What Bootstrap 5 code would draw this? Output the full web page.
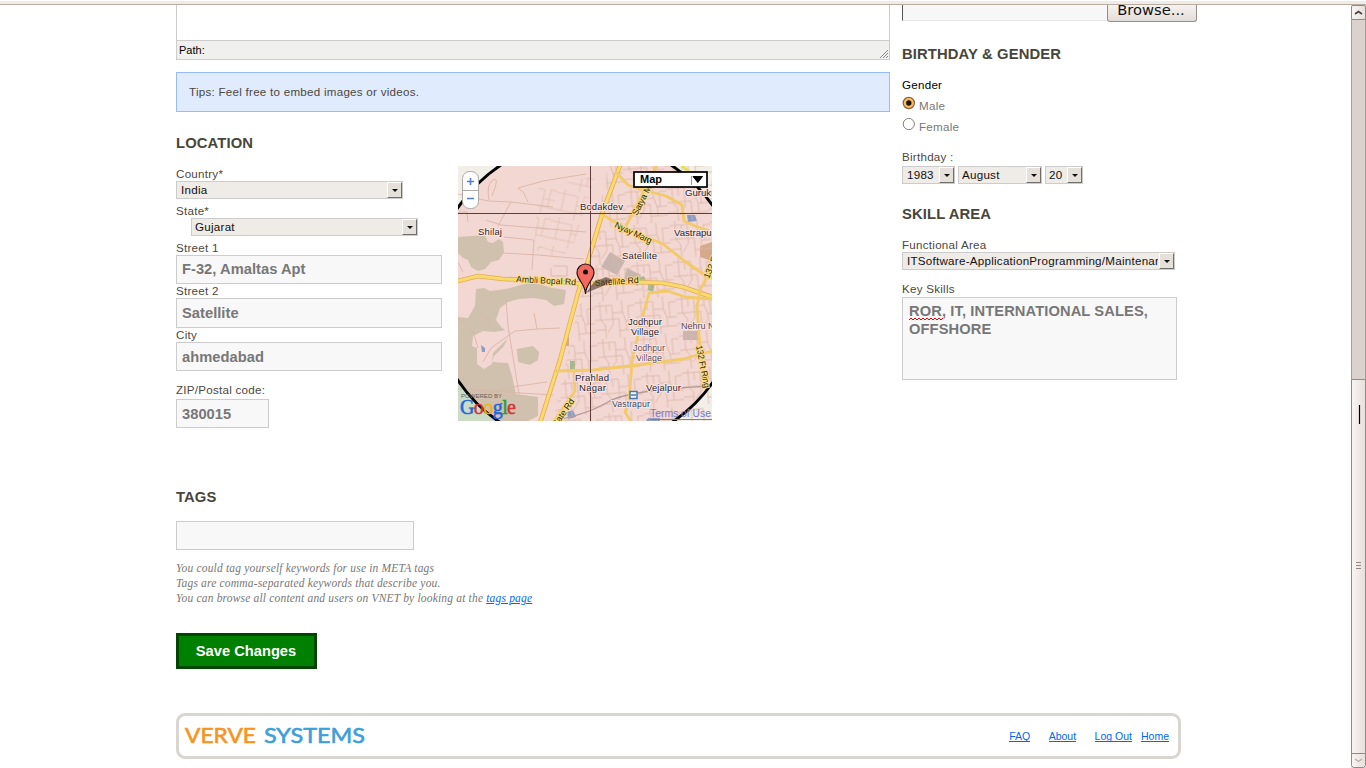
<!DOCTYPE html>
<html lang="en">
<head>
<meta charset="utf-8">
<meta name="viewport" content="width=device-width, initial-scale=1">
<title>Edit profile</title>
<link href="https://cdn.jsdelivr.net/npm/bootstrap@5.3.0/dist/css/bootstrap.min.css" rel="stylesheet">
<style>
body{font-family:"Liberation Sans",Arial,sans-serif;font-size:11.6px;line-height:14px;letter-spacing:.26px;color:#4b4840;background:#fff;height:768px;overflow:hidden}
.topstrip{height:5px;background:#efebe7;border-top:1px solid #fff;border-bottom:1px solid #b9aca0}
.viewport{height:763px}
.page{width:1005px;margin-left:176px}
.maincol{width:714px;height:708px}
.sidecol{width:295px;margin-right:-16px}
.editor{height:55px;border:1px solid #ccc;border-top:0}
.pathbar{height:19px;background:#f0f0ee;border-top:1px solid #ccc;color:#000;font-size:11px;letter-spacing:0;padding-left:2px;line-height:18px}
.tips{height:40px;margin-top:12px;padding:0 12px;background:#e0ebfe;border:1px solid #96bdf9;line-height:38px}
h2.sect{font-size:14.8px;line-height:18px;font-weight:700;letter-spacing:.12px;margin:0;color:#48453a}
.lbl{display:block;height:14px;line-height:14px}
.field{display:block;height:29px;width:266px;border:1px solid #ccc;border-radius:0;background:#f8f8f8;color:#777;font:700 14.7px/18px "Liberation Sans",Arial,sans-serif;letter-spacing:.03px;padding:0 5px}
.pick{position:relative;height:18px;width:227px}
.pick select{appearance:none;display:block;width:100%;height:18px;border:1px solid #ccc;border-radius:0;background:#efebe7;color:#111;font:11.6px/16px "Liberation Sans",Arial,sans-serif;letter-spacing:.26px;padding:0 16px 0 4px;overflow:hidden;opacity:1}
.pick i{position:absolute;right:1px;top:1px;width:15px;height:16px;background:#e6e0da;border:1px solid;border-color:#fff #716f6b #716f6b #fff}
.pick i::after{content:"";position:absolute;left:4px;top:6px;border:3px solid transparent;border-top-color:#111;border-bottom:0}
.hint{font:italic 11.5px/15px "Liberation Serif",serif;letter-spacing:.18px;color:#777;margin-top:11px}
a{color:#06f}
.save{width:141px;height:36px;margin-top:27px;background:#008000;border:3px solid #004600;border-radius:0;color:#fff;font-weight:700;font-size:14.7px;letter-spacing:0;padding:0 1px 0 0}
.foot{height:46px;border:3px solid #d9d5d1;border-radius:9px}
.foot a{font-size:10.5px;letter-spacing:0;line-height:12px;text-decoration:none;border-bottom:1px solid #06f;height:12px;position:relative;top:-.5px}
.mapbox{width:254px;height:255px;margin-left:16px}
.filebox{width:205px;height:16px;background:#f7f7f7;border-left:1px solid #555;border-bottom:1px solid #e6e6e6}
.browse{width:90px;height:17px;background:linear-gradient(#f5f2f0,#e4ddd7);border:1px solid #978d84;border-top:0;border-radius:0 0 3px 3px;color:#111;font:14.7px/9px "DejaVu Sans",sans-serif;letter-spacing:0;text-align:center;padding-right:2px}
.radioline{height:21px;color:#777}
.radioline svg{margin-right:4px}
.skills{width:275px;height:83px;border:1px solid #ccc;background:#f8f8f8;color:#777;font:700 14.7px/18px "Liberation Sans",Arial,sans-serif;letter-spacing:.1px;padding:4px 6px}
.sb{width:15px;flex:none}
</style>
</head>
<body>
<div class="topstrip"></div>
<div class="viewport d-flex justify-content-between">
 <div class="page">
  <div class="d-flex">
   <main class="maincol">
    <div class="editor d-flex flex-column justify-content-end">
      <div class="pathbar d-flex justify-content-between align-items-end"><span>Path:</span>
       <svg width="10" height="10" viewBox="0 0 10 10" stroke="#888" stroke-width="1"><path d="M1 9 9 1M4 9 9 4M7 9 9 7"/></svg></div>
    </div>
    <div class="tips">Tips: Feel free to embed images or videos.</div>
    <h2 class="sect" style="margin-top:22px">LOCATION</h2>
    <div class="d-flex" style="margin-top:14px;height:322px">
     <form style="padding-top:1px">
      <label class="lbl">Country*</label>
      <div class="pick"><select><option>India</option></select><i></i></div>
      <label class="lbl" style="margin-top:5px">State*</label>
      <div class="pick" style="margin-left:15px"><select style="padding-left:3px"><option>Gujarat</option></select><i></i></div>
      <label class="lbl" style="margin-top:5px">Street 1</label>
      <input class="field" style="padding-bottom:1px" value="F-32, Amaltas Apt">
      <label class="lbl">Street 2</label>
      <input class="field" style="height:30px" value="Satellite">
      <label class="lbl">City</label>
      <input class="field" value="ahmedabad">
      <label class="lbl" style="margin-top:12px">ZIP/Postal code:</label>
      <input class="field" style="width:93px;margin-top:2px" value="380015">
     </form>
     <svg class="mapbox" viewBox="0 0 254 255" font-family="Liberation Sans" letter-spacing="0">
      <defs>
       <clipPath id="mc"><path d="M0 0h254v255H0z"/></clipPath>
       <pattern id="streets" width="34" height="29" patternUnits="userSpaceOnUse" patternTransform="rotate(12)"><path d="M0 5h22v9h12M8 0v22M0 22h34M22 14v15M28 22V4h6" fill="none" stroke="#dfbfb1" stroke-width=".8"/></pattern>
       <pattern id="streets2" width="41" height="37" patternUnits="userSpaceOnUse" patternTransform="rotate(-5)"><path d="M0 4h18v8h10l3 9h10M6 0v18l4 6v13M0 18h24v12h17M18 12v11l-6 8M28 0v12M34 21V6h7M24 30v7M0 28h10M31 21v9M12 4v8" fill="none" stroke="#d9b5a6" stroke-width=".8"/></pattern>
      </defs>
      <g clip-path="url(#mc)">
       <path fill="#f1efe8" d="M0 0h254v255H0z"/>
       <path fill="#cadbc6" d="M0 215 45 255H0z"/>
       <circle cx="128" cy="128" r="154" fill="#f3d7d2"/>
       <g fill="#cfc1ae">
        <path d="M0 71 27 69 30 76 35 77 41 73 45 76 46 86 41 94 33 96 27 103 20 105 13 101 10 94 5 92 0 87z"/>
        <path d="M18 123 26 122 32 125 48 123 74 116 94 122 108 124 106 138 96 140 88 134 75 132 61 133 50 136 42 142 38 154 44 162 52 167 46 180 36 190 34 196 50 197 54 210 58 228 80 231 80 250 70 255H41L0 217V151L10 152 17 140z"/>
        <path d="M59 183 75 180 81 186 80 194 72 199 60 196z"/>
       </g>
       <path fill="#f3d7d2" d="M15 170 25 165 36 166 48 164 53 169 35 187 34 198 26 203 19 198 19 182 14 180z"/>
       <path d="M23 179l4 3v4h-3z" fill="#8f9cc0"/>
       <g fill="#c9b5b0"><path d="M152 86l15 9-8 14-16-8z"/><path d="M225 165h17v9h-17zM169 102l14 7-3 11-14-6z"/></g>
       <path fill="#d5a98b" d="M242 80l12-4v19l-12-4zM106 171h5v9h-5z"/>
       <path fill="#a5b78d" d="M112 195h5v9h-5zM190 119l7-2-2 9-5-2zM181 112l5-2 2 5-5 2z"/>
       <path fill="#8c9cc8" d="M229 49h8l2 6-9 1zM109 246l6-2 3 7-8 2zM190 252h12v3h-14z"/>
       <path fill="url(#streets)" d="M80 22 138 10 115 80 104 92 76 84z"/>
       <path fill="url(#streets2)" d="M150 0H254V255H95L112 178 135 75z"/>
       <g fill="none" stroke="#dbb5a7" stroke-width=".9">
        <path d="M0 28 30 35 53 36 95 41M31 34Q28 18 35 14T34 30M60 22 66 27 70 36M60 22 85 15 128 8M40 60 53 36M28 54 43 59 128 66M46 71 76 74M45 87 80 89 126 93M76 74 74 104M0 96 5 106M95 100h14v10H93v-8M0 46h9l1 10"/>
        <path d="M0 152 15 165 20 182M25 196 33 182 57 165 80 163 102 162M48 133 50 160 61 228M0 223 95 229M20 230 60 220 89 216M76 147 79 163M22 148 35 160M30 154 34 148"/>
       </g>
       <path d="M95 255Q130 248 150 236T254 220" fill="none" stroke="#b69a9b" stroke-width="1.4"/>
       <g fill="none" stroke="#dfae54" stroke-width="4.600" stroke-linecap="round" stroke-linejoin="round">
        <path d="M163-3 145 45 133 85 120 127 102 194 82 257"/>
        <path d="M0 115 20 110 45 113 80 114 125 118 176 116 205 117 225 121 254 131"/>
       </g>
       <path fill="none" stroke-width="3" stroke-linecap="round" stroke-linejoin="round" stroke="#fbd96d" d="M163-3 145 45 133 85 120 127 102 194 82 257M0 115 20 110 45 113 80 114 125 118 176 116 205 117 225 121 254 131"/>
       <g fill="none" stroke="#f2ca68" stroke-width="2.800" stroke-linecap="round" stroke-linejoin="round">
        <path d="M145 49 165 61 205 78 225 94 245 108 254 112M158 6 170 19 185 24 208 30 224 39 226 55 237 60 254 66M254 103 243 122 239 140 241 170 246 215M168 60 191 15 198 0M98 205 135 204 180 199 225 193 254 185M191 127 182 160 174 196 171 235 167 246 174 257M116 205 117 225 109 236 95 257M191 127 210 125 227 131 254 133"/>
       </g>
       <path d="M222-3Q230 8 249 14" fill="none" stroke="#e6df49" stroke-width="3"/>
       <path d="M0 47.500H254M132.500 0V255" stroke="#5f3d3d" stroke-width="1"/>
       <circle cx="128" cy="128" r="154.500" fill="none" stroke="#000" stroke-width="2.800"/>
       <g font-size="9.600" fill="#2c2430" stroke="#f8e5e1" stroke-width="2" paint-order="stroke">
        <text x="20" y="69" textLength="24">Shilaj</text><text x="122" y="44" textLength="43">Bodakdev</text>
        <text x="164" y="93" textLength="35">Satellite</text><text x="216" y="70">Vastrapur</text><text x="227" y="30">Gurukul</text>
        <text x="170" y="159" textLength="34">Jodhpur</text><text x="173" y="169" textLength="28">Village</text>
        <g fill="#5c4a55" font-size="9"><text x="175" y="185" textLength="32">Jodhpur</text><text x="178" y="195" textLength="26">Village</text><text x="223" y="163">Nehru Nagar</text></g>
        <text x="117" y="215" textLength="34">Prahlad</text><text x="121" y="225" textLength="27">Nagar</text>
        <text x="188" y="225" textLength="35">Vejalpur</text><text x="154" y="241" font-size="9" fill="#37476f" textLength="38">Vastrapur</text>
       </g>
       <g font-size="8.800" fill="#31270c" stroke="#f7dc84" stroke-width="2" paint-order="stroke">
        <text transform="translate(58 116) rotate(3)" textLength="60">Ambli Bopal Rd</text>
        <text transform="translate(137 120) rotate(-4)" textLength="44">Satellite Rd</text>
        <text transform="translate(156 61) rotate(25)" textLength="40">Nyay Marg</text>
        <text transform="translate(179 50) rotate(-63)">Satya Marg</text>
        <text transform="translate(238 180) rotate(79)" textLength="43">132 Ft Ring</text>
        <text transform="translate(251 113) rotate(-68)">132 Ft</text>
        <text transform="translate(98 262) rotate(-55)">Gate Rd</text>
       </g>
       <path d="M172 225.500h7v7h-7z" fill="#fff" stroke="#4377b5" stroke-width="1.500"/><path d="M173 229h5" stroke="#4377b5" stroke-width="1.500"/>
       <path d="M128 127 136 116 148 111 155 114 145 120z" fill="#4b3430" opacity=".6"/>
       <path d="M127.500 128C127 117 119 114 119 106.500a8.500 8.500 0 0 1 17 0C136 114 128 117 127.500 128z" fill="#f4695f" stroke="#28110f" stroke-width="1.200"/><circle cx="127.500" cy="106" r="2.500" fill="#111"/>
       <rect x="4.500" y="5.500" width="16" height="37" rx="7" fill="#fff" stroke="#aaa"/><path d="M5 24.500h15" stroke="#aaa"/><path d="M9 15.500h7M12.500 12v7M9 32.500h7" stroke="#567ecb" stroke-width="1.600"/>
       <rect x="176" y="6" width="73" height="15" fill="#fff" stroke="#000" stroke-width="1.700"/>
       <text x="182" y="17" font-weight="700" font-size="11" fill="#000" textLength="22">Map</text><path d="M233.500 10v9" stroke="#999"/><path d="M235 10.500h9.500l-4.700 6z" fill="#000" stroke="#000" stroke-width="1"/>
       <text x="3" y="231.500" font-size="6" fill="#665e58" textLength="41">POWERED BY</text>
       <g font-family="Liberation Serif" font-size="20" stroke-width=".5"><text y="248" x="2" textLength="56"><tspan fill="#2464dd" stroke="#2464dd">G</tspan><tspan fill="#d63434" stroke="#d63434">o</tspan><tspan fill="#e7b71c" stroke="#e7b71c">o</tspan><tspan fill="#2464dd" stroke="#2464dd">g</tspan><tspan fill="#2a9c3b" stroke="#2a9c3b">l</tspan><tspan fill="#d63434" stroke="#d63434">e</tspan></text></g>
       <text x="192" y="251" font-size="11" fill="#7777cc" textLength="61" lengthAdjust="spacingAndGlyphs">Terms of Use</text><path d="M192 253.500h62" stroke="#7777cc"/>
      </g>
     </svg>
    </div>
    <h2 class="sect">TAGS</h2>
    <input class="field" style="width:238px;margin-top:15px" aria-label="Tags">
    <div class="hint">You could tag yourself keywords for use in META tags<br>Tags are comma-separated keywords that describe you.<br>You can browse all content and users on VNET by looking at the <a href="#">tags page</a></div>
    <button class="save d-block">Save Changes</button>
   </main>
   <aside class="sidecol ms-auto flex-shrink-0">
    <div class="d-flex"><div class="filebox"></div><div class="browse">Browse...</div></div>
    <h2 class="sect" style="margin-top:23px">BIRTHDAY &amp; GENDER</h2>
    <div class="lbl text-black" style="margin-top:15px">Gender</div>
    <div class="radioline d-flex" style="margin-top:4px"><svg width="13" height="15" viewBox="0 0 13 15"><circle cx="6.800" cy="7" r="5.600" fill="#fdbb67" stroke="#8d6034" stroke-width="1.200"/><circle cx="6.800" cy="7" r="2.700" fill="#1c140d"/></svg><span style="padding-top:3px">Male</span></div>
    <div class="radioline d-flex"><svg width="13" height="15" viewBox="0 0 13 15"><circle cx="6.800" cy="7" r="5.600" fill="#fff" stroke="#8b8175"/></svg><span style="padding-top:3px">Female</span></div>
    <div class="lbl" style="margin-top:12px">Birthday :</div>
    <div class="d-flex" style="gap:3px;margin-top:2px">
      <div class="pick" style="width:53px"><select><option>1983</option></select><i></i></div>
      <div class="pick" style="width:84px"><select style="padding-left:3px"><option>August</option></select><i></i></div>
      <div class="pick" style="width:38px"><select style="padding-left:3px"><option>20</option></select><i></i></div>
    </div>
    <h2 class="sect" style="margin-top:21px">SKILL AREA</h2>
    <div class="lbl" style="margin-top:15px">Functional Area</div>
    <div class="pick" style="width:273px"><select><option>ITSoftware-ApplicationProgramming/Maintenance</option></select><i></i></div>
    <div class="lbl" style="margin-top:12px">Key Skills</div>
    <div class="skills" style="margin-top:1px"><svg width="34" height="4" viewBox="0 0 34 4" style="position:absolute;margin-top:15px"><path d="M0 3 2 1 4 3 6 1 8 3 10 1 12 3 14 1 16 3 18 1 20 3 22 1 24 3 26 1 28 3 30 1 32 3 34 1" fill="none" stroke="#e00"/></svg>ROR, IT, INTERNATIONAL SALES,<br>OFFSHORE</div>
   </aside>
  </div>
  <footer class="foot d-flex align-items-center justify-content-between">
    <svg width="190" height="30" viewBox="0 0 190 30" font-family="Lato" font-size="21" letter-spacing="0" stroke-width=".6"><text x="6" y="22" fill="#f7941e" stroke="#f7941e" textLength="71" lengthAdjust="spacingAndGlyphs">VERVE</text><text x="85" y="22" fill="#3e9fd8" stroke="#3e9fd8" textLength="101" lengthAdjust="spacingAndGlyphs">SYSTEMS</text></svg>
    <nav class="d-flex" style="padding-right:9px"><a href="#" style="margin-right:18.500px">FAQ</a><a href="#" style="margin-right:18.500px">About</a><a href="#" style="margin-right:9px">Log Out</a><a href="#">Home</a></nav>
  </footer>
 </div>
 <svg class="sb" width="15" height="763" viewBox="0 0 15 763">
  <defs><linearGradient id="g"><stop stop-color="#f8f6f4"/><stop offset="1" stop-color="#e7dfdb"/></linearGradient></defs>
  <path d="M0 0h15v763H0z" fill="#dbd2cd"/>
  <g fill="url(#g)" stroke="#93897f"><rect x=".5" y=".5" width="14" height="14" rx="1.500"/><path d="M.5 374.500h14v374H.5z"/><path d="M.5 748.500h14v12l-2 2h-10l-2-2z"/></g>
  <path d="M.5 14v361M14.500 14v361" stroke="#a89d94"/>
  <path d="M4 9 7.500 6.500 11 9" fill="none" stroke="#444" stroke-width="1.600"/><path d="M4 754 7.500 756.500 11 754" fill="none" stroke="#b7ada5" stroke-width="1.300"/>
  <path d="M5 557.500h5M5 560.500h5M5 563.500h5" stroke="#93897f"/>
  <path d="M8.500 400v19" stroke="#000" stroke-width="1.200"/>
 </svg>
</div>
<script src="https://cdn.jsdelivr.net/npm/bootstrap@5.3.0/dist/js/bootstrap.bundle.min.js"></script>
</body>
</html>
